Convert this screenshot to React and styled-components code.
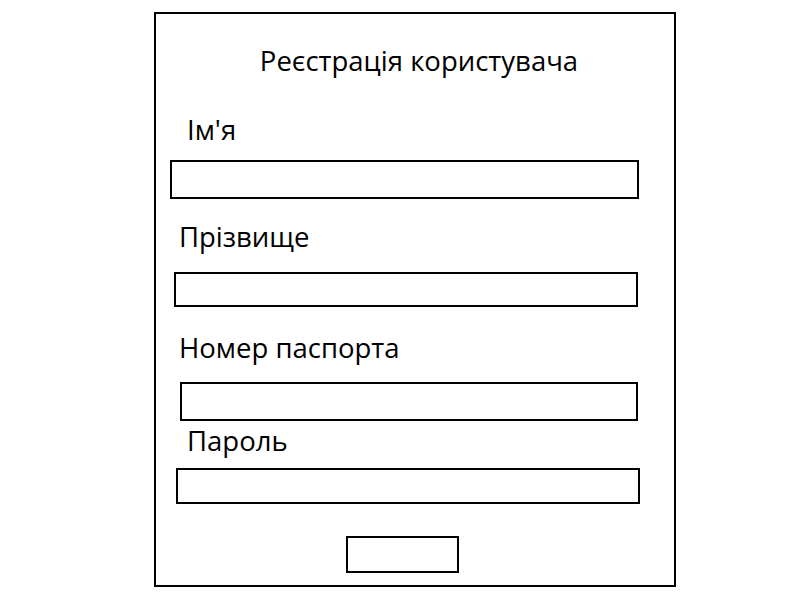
import React from "react";
import styled, { createGlobalStyle } from "styled-components";

const Global = createGlobalStyle`
  html, body { margin: 0; padding: 0; background: #ffffff; }
  body { font-family: "Open Sans", "Noto Sans", sans-serif; color: #000; }
`;

const Frame = styled.div`
  box-sizing: border-box;
  margin: 12px 0 0 154px;
  width: 522px;
  height: 575px;
  border: 2px solid #000;
  display: flex;
  flex-direction: column;
`;

const Title = styled.h1`
  margin: 32px 0 0 8px;
  font-size: 27.5px;
  font-weight: 400;
  line-height: 30px;
  text-align: center;
`;

const Label = styled.label`
  display: block;
  margin: ${(p) => p.$top}px 0 0 ${(p) => p.$indent}px;
  font-size: 27.5px;
  line-height: 30px;
`;

const Input = styled.div`
  box-sizing: border-box;
  margin: ${(p) => p.$top}px 0 0 ${(p) => p.$indent}px;
  width: ${(p) => p.$w}px;
  height: ${(p) => p.$h}px;
  border: 2px solid #000;
  background: #fff;
`;

const Button = styled.div`
  box-sizing: border-box;
  margin: 32px 0 0 190px;
  width: 113px;
  height: 37px;
  border: 2px solid #000;
`;

const fields = [
  { label: "Ім'я", lt: 39, li: 31, it: 15, ii: 14, w: 469, h: 39 },
  { label: "Прізвище", lt: 23, li: 23, it: 20, ii: 18, w: 464, h: 35 },
  { label: "Номер паспорта", lt: 26, li: 23, it: 19, ii: 24, w: 458, h: 39 },
  { label: "Пароль", lt: 5, li: 31, it: 12, ii: 20, w: 464, h: 36 },
];

export default function App() {
  return (
    <>
      <Global />
      <Frame>
        <Title>Реєстрація користувача</Title>
        {fields.map((f) => (
          <React.Fragment key={f.label}>
            <Label $top={f.lt} $indent={f.li}>{f.label}</Label>
            <Input $top={f.it} $indent={f.ii} $w={f.w} $h={f.h} />
          </React.Fragment>
        ))}
        <Button />
      </Frame>
    </>
  );
}
